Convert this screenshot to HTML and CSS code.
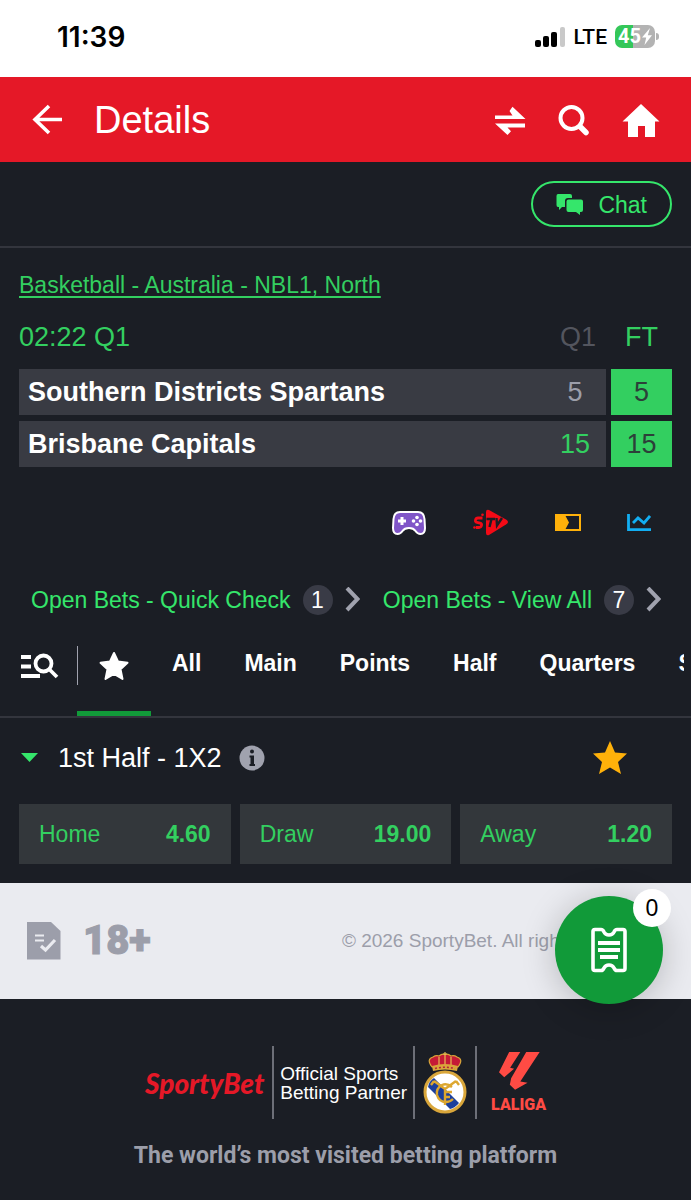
FILE: index.html
```html
<!DOCTYPE html>
<html lang="en">
<head>
<meta charset="utf-8">
<meta name="viewport" content="width=device-width, initial-scale=1">
<title>Details</title>
<link rel="stylesheet" href="styles.css">
</head>
<body>
<div class="status">
  <span class="status-time">11:39</span>
  <div class="status-right">
    <svg width="31" height="22" viewBox="0 0 31 22"><rect x="0" y="14" width="6" height="7" rx="2"/><rect x="8" y="10" width="6" height="11" rx="2"/><rect x="16" y="6" width="6" height="15" rx="2"/><rect x="25" y="1" width="5" height="20" rx="2" fill="#c9c9c9"/></svg>
    <span class="status-net">LTE</span>
    <div class="battery">
      <span>45</span>
      <svg width="10" height="17" viewBox="0 0 10 17"><path d="M8 0 0 9.500h4.200L2.500 17 10 7.200H5.800z" fill="#fff"/></svg>
    </div>
  </div>
</div>
<header class="header">
  <button class="icon-btn" aria-label="Back"><svg width="32" height="32" viewBox="0 0 32 32" fill="none" stroke="#fff" stroke-width="3.600"><path d="M18 2 4 15.500 18 29M4 15.500h27"/></svg></button>
  <h1 class="title">Details</h1>
  <button class="icon-btn" aria-label="Swap"><svg width="32" height="30" viewBox="0 0 32 30" fill="#fff"><path d="M1 10.500h17.500L15.500 6l3-4.200L31.500 14H1zM31 22.500H13.500L17 26.300 13.500 30 1 18.500h30z"/></svg></button>
  <button class="icon-btn" aria-label="Search"><svg width="34" height="32" viewBox="0 0 34 32" fill="none" stroke="#fff"><circle cx="14.500" cy="14" r="11" stroke-width="4"/><path d="m23 22.500 6 6" stroke-width="5.500" stroke-linecap="round"/></svg></button>
  <button class="icon-btn" aria-label="Home"><svg width="38" height="34" viewBox="0 0 38 34" fill="#fff"><path d="M19 1 37.500 18.500H33V34H23V23h-7v11H6V18.500H.5z"/></svg></button>
</header>
<main>
  <div class="chat-bar">
    <button class="chat"><svg width="28" height="22" viewBox="0 0 28 22" fill="#35e66b"><path d="M2 0h12q2 0 2 2v2h-4q-3 0-3 3v6H6l-3 3v-3H2q-1.500 0-1.500-2V2Q.5 0 2 0z"/><path d="M12.500 5.500H25q2 0 2 2V16q0 2-2 2h-1v3l-4-3h-7.500q-2 0-2-2V7.500q0-2 2-2z"/></svg>Chat</button>
  </div>
  <section class="match">
    <a class="league" href="#">Basketball - Australia - NBL1, North</a>
    <table class="score">
      <thead><tr><th class="clock">02:22 Q1</th><th class="q-col">Q1</th><th class="ft-col">FT</th></tr></thead>
      <tbody>
        <tr><th class="team">Southern Districts Spartans</th><td class="q">5</td><td class="ft">5</td></tr>
        <tr><th class="team">Brisbane Capitals</th><td class="q lead">15</td><td class="ft">15</td></tr>
      </tbody>
    </table>
    <div class="media">
      <button class="icon-btn" aria-label="Games"><svg width="36" height="26" viewBox="0 0 36 26"><path d="M9 2h18q6 0 6.500 7l.5 9q0 6-4.500 6-3 0-5-3-2-3-6.500-3t-6.500 3q-2 3-5 3Q2 24 2 18l.5-9Q3 2 9 2z" fill="#8055c8" stroke="#fff" stroke-width="2"/><path d="M11 7v8M7 11h8" stroke="#fff" stroke-width="3"/><g fill="#fff"><circle cx="26" cy="7.500" r="1.800"/><circle cx="26" cy="14.500" r="1.800"/><circle cx="22.500" cy="11" r="1.800"/><circle cx="29.500" cy="11" r="1.800"/></g></svg></button>
      <button class="icon-btn" aria-label="Live TV"><svg width="36" height="28" viewBox="0 0 36 28"><path d="M13 3q0-3 3-2l17 9.500q4 2.500 0 5L16 26q-3 1-3-2z" fill="#f30a16"/><path d="M9.500 9H5q-2 0-2.500 2t1.500 2.500l3 .5q2 .5 1.500 2.500T6 18.500H3" stroke="#f30a16" stroke-width="2.800" fill="none"/><circle cx="9.500" cy="5.800" r="1.300" fill="#f30a16"/><circle cx="1.500" cy="18.500" r="1.300" fill="#f30a16"/><path d="M13.500 10H22M18.500 10 16.500 18M23.500 9l.5 7.500L29 9" fill="none" stroke="#1b1e25" stroke-width="2.400"/></svg></button>
      <button class="icon-btn" aria-label="Tracker"><svg width="26" height="18" viewBox="0 0 26 18"><path d="M1 1h24v15H1z" fill="none" stroke="#ffb10a" stroke-width="2"/><path d="M1 1h9l4 7.500-4 7.500H1z" fill="#ffb10a"/></svg></button>
      <button class="icon-btn" aria-label="Statistics"><svg width="24" height="18" viewBox="0 0 24 18" fill="none" stroke="#12aef2" stroke-width="2.800"><path d="M1.500 0v15.600H24M6 9l5-5 6 5 6-7"/></svg></button>
    </div>
    <div class="open-bets">
      <a href="#">Open Bets - Quick Check<span class="count">1</span><svg width="15" height="26" viewBox="0 0 15 26"><path d="m2 1 10.500 11L2 23" fill="none" stroke="#a0a2ae" stroke-width="4"/></svg></a>
      <a href="#">Open Bets - View All<span class="count">7</span><svg width="15" height="26" viewBox="0 0 15 26"><path d="m2 1 10.500 11L2 23" fill="none" stroke="#a0a2ae" stroke-width="4"/></svg></a>
    </div>
  </section>
  <nav class="tabs">
    <button class="icon-btn find" aria-label="Find market"><svg width="38" height="26" viewBox="0 0 38 26" fill="none" stroke="#fff" stroke-width="3.800"><path d="M0 4h10M0 13.500h10M0 23h19"/><circle cx="22.500" cy="10.500" r="8"/><path d="m28 16 8 8"/></svg></button>
    <div class="tab-list">
      <button class="tab active" aria-label="Favourites"><svg width="30" height="30" viewBox="0 0 30 30" fill="#fff" stroke="#fff" stroke-width="2" stroke-linejoin="round"><path d="m15 2 4 8.500 9.500 1.300-7 6.400L23.500 28 15 23l-8.500 5 2-9.800-7-6.400L11 10.500z"/></svg></button>
      <button class="tab">All</button><button class="tab">Main</button><button class="tab">Points</button><button class="tab">Half</button><button class="tab">Quarters</button><button class="tab">Specials</button>
    </div>
  </nav>
  <section class="market">
    <div class="market-head">
      <svg width="18" height="10" viewBox="0 0 18 10"><path d="M0 0h17L8.500 9z" fill="#35e66b"/></svg>
      <h2>1st Half - 1X2</h2>
      <svg width="26" height="26" viewBox="0 0 26 26"><circle cx="13" cy="13" r="12.500" fill="#a0a2ae"/><circle cx="13" cy="6.500" r="2" fill="#1b1e25"/><path d="M10.500 10.500H15V19h1v2h-5.500v-2h1v-6.500h-1z" fill="#1b1e25"/></svg>
      <button class="icon-btn fav" aria-label="Remove favourite"><svg width="34" height="34" viewBox="0 0 34 34" fill="#ffb10a"><path d="m17 0 5 11.500L34 12.500l-9 8.500 3 12-11-6.500L6 33l3-12-9-8.500 12-1z"/></svg></button>
    </div>
    <div class="odds">
      <button class="odd"><span>Home</span><b>4.60</b></button>
      <button class="odd"><span>Draw</span><b>19.00</b></button>
      <button class="odd"><span>Away</span><b>1.20</b></button>
    </div>
  </section>
</main>
<footer>
  <div class="legal">
    <svg width="34" height="38" viewBox="0 0 34 38"><path d="M0 0h24l9.500 9v28.500H0z" fill="#9c9eaa"/><path d="M8 13.500h9M8 18.500h9" stroke="#eaebf0" stroke-width="2.200"/><path d="m14 24 4.500 4L28 18" fill="none" stroke="#eaebf0" stroke-width="3.200"/></svg>
    <span class="age">18+</span>
    <span class="copy">© 2026 SportyBet. All rights reserved.</span>
    <button class="slip" aria-label="Betslip"><svg width="36" height="46" viewBox="0 0 36 46" fill="none" stroke="#fff"><path d="M4 2.500h6q2 0 3 2.500 1.500 3 5 3t5-3q1-2.500 3-2.500h6q2 0 2 2v37q0 2-2 2h-6q-2 0-3-2.500-1.500-3-5-3t-5 3q-1 2.500-3 2.500H4q-2 0-2-2v-37q0-2 2-2z" stroke-width="3.600"/><path d="M7 16h22M7 23h22M9 30h18" stroke-width="4.200"/></svg><span class="slip-count">0</span></button>
  </div>
  <div class="partners">
    <div class="partner-row">
      <span class="brand">SportyBet</span>
      <span class="partner-text">Official Sports<br>Betting Partner</span>
      <span class="crest"><svg width="44" height="62" viewBox="0 0 44 62"><path d="M9 15Q3 7 10 5q3-2 6-1 3-2.500 6-1.500 3-1 6 1.500 3-1 6 1 7 2 1 10z" fill="#c51b36" stroke="#d9a63a" stroke-width="1.200"/><path d="M22 0v5M20 2h4M16 5v8M22 5v8M28 5v8" stroke="#e8bd53" stroke-width="1.200"/><path d="M9 14q13-4 26 0l-1 5q-12-3-24 0z" fill="#d9a63a"/><path d="M12 16.500q10-2.500 20 0" fill="none" stroke="#b3233c" stroke-width="1.500" stroke-dasharray="2 2"/><circle cx="22" cy="40" r="20" fill="#fff" stroke="#d9a63a" stroke-width="3"/><path d="M5 35q1-6 6-9l25 25q-4 5-9 6z" fill="#1c3f9c"/><path d="M11 29l11 8 11-8M11 29l-3 4M33 29l3 4M29 35q-5-4-10-2-6 3-5 10 2 7 9 7 4 0 7-3M22 38v15M22 40h7M22 45h5" fill="none" stroke="#dda72f" stroke-width="2.400"/></svg></span>
      <span class="laliga"><svg width="42" height="40" viewBox="288 61 128 120" fill="#ff4b44"><path d="M322 63h34l-31 48 12 3-30 26-16-15z"/><path d="M374 63h41l-59 90 22 4-38 21-16-15 4-20z"/></svg>LALIGA</span>
    </div>
    <p class="tagline">The world’s most visited betting platform</p>
  </div>
</footer>
</body>
</html>
```
FILE: styles.css
```css
* { box-sizing: border-box; }
body {
  margin: 0;
  background: #1b1e25;
  color: #fff;
  font: 23px/30px "Liberation Sans", Arial, sans-serif;
}
button {
  font: inherit;
  color: inherit;
  background: none;
  border: 0;
  padding: 0;
  white-space: nowrap;
}
a { color: inherit; }
svg { display: block; flex: none; }
h1, h2, p { margin: 0; font-weight: 400; }
.icon-btn { flex: none; }

.status {
  display: flex;
  justify-content: space-between;
  align-items: center;
  height: 77px;
  padding: 0 33px 4px 57px;
  background: #fff;
  color: #000;
}
.status-time { font: 600 28px/32px Inter, sans-serif; }
.status-right { display: flex; align-items: center; gap: 8px; }
.status-net { font: 500 21px/28px Roboto, sans-serif; }
.battery {
  position: relative;
  display: flex;
  align-items: center;
  justify-content: center;
  gap: 1px;
  width: 40px;
  height: 23px;
  margin-right: 3px;
  border-radius: 7px;
  background: linear-gradient(90deg, #34c759 45%, #b3b3b3 45%);
  color: #fff;
  font: 700 20px/23px Roboto, sans-serif;
}
.battery::after {
  content: "";
  position: absolute;
  right: -4px;
  top: 8px;
  width: 3px;
  height: 7px;
  border-radius: 0 3px 3px 0;
  background: #b3b3b3;
}

.header {
  display: flex;
  align-items: center;
  height: 85px;
  padding: 0 31px;
  gap: 31px;
  background: #e51827;
}
.title { flex: 1; font-size: 38px; line-height: 44px; }

.chat-bar {
  display: flex;
  justify-content: flex-end;
  padding: 19px 19px;
  border-bottom: 2px solid #33353d;
}
.chat {
  display: flex;
  align-items: center;
  gap: 14px;
  height: 46px;
  padding: 2px 23px 0;
  border: 2px solid #35e66b;
  border-radius: 23px;
  color: #35e66b;
}

.match { padding: 22px 19px 0; }
.league { display: block; color: #33cf60; text-underline-offset: 3px; text-decoration-thickness: 2px; }
.score {
  width: 100%;
  margin-top: 15px;
  border-spacing: 0 6px;
  font-size: 27px;
  line-height: 32px;
}
.score th, .score td { padding: 0; text-align: center; font-weight: 400; }
.score thead th { height: 42px; padding-bottom: 10px; color: #33cf60; }
.score .clock { text-align: left; }
.score thead .q-col { width: 62px; padding-left: 6px; color: #53555e; }
.score .ft-col { width: 66px; border-left: 5px solid transparent; }
.score tbody th, .score tbody td { height: 46px; background: #393b43; }
.score tbody .team { padding-left: 9px; text-align: left; font-weight: 700; }
.score tbody .q { color: #9c9eaa; }
.score tbody .lead { color: #33cf60; }
.score tbody .ft {
  border-left: 5px solid #1b1e25;
  background: #33cf60;
  color: #2c4039;
}

.media {
  display: flex;
  justify-content: flex-end;
  align-items: center;
  gap: 46px;
  height: 36px;
  margin-top: 32px;
  padding-right: 21px;
}
.open-bets {
  display: flex;
  justify-content: space-between;
  margin-top: 44px;
  padding: 0 11px 0 12px;
  color: #35e66b;
}
.open-bets a {
  display: flex;
  align-items: center;
  gap: 12px;
  text-decoration: none;
  white-space: nowrap;
}
.count {
  width: 30px;
  height: 30px;
  border-radius: 50%;
  background: #393b46;
  color: #fff;
  text-align: center;
}

.tabs {
  display: flex;
  margin-top: 19px;
  padding: 0 7px 0 21px;
  border-bottom: 2px solid #33353d;
}
.find { height: 64px; }
.tab-list {
  position: relative;
  display: flex;
  gap: 43px;
  flex: 1;
  min-width: 0;
  margin-left: 18px;
  overflow: hidden;
}
.tab-list::before {
  content: "";
  position: absolute;
  left: -1px;
  top: 12px;
  width: 2px;
  height: 39px;
  background: #a0a2ae;
}
.tab {
  flex: none;
  height: 82px;
  padding-bottom: 24px;
  font-weight: 700;
}
.tab.active {
  margin: 0 -22px 0 0;
  padding: 4px 22px 18px;
  border-bottom: 5px solid #119a39;
}

.market { padding: 0 19px 19px; }
.market-head {
  display: flex;
  align-items: center;
  height: 86px;
  padding: 0 45px 6px 2px;
}
.market-head h2 { margin: 0 17px 0 19px; font-size: 27px; line-height: 32px; }
.fav { margin-left: auto; }
.odds { display: grid; grid-template-columns: repeat(3, 1fr); gap: 9px; }
.odd {
  display: flex;
  justify-content: space-between;
  align-items: center;
  height: 60px;
  padding: 0 20px;
  background: #33373b;
  color: #33cf60;
}

.legal {
  position: relative;
  display: flex;
  align-items: center;
  height: 116px;
  padding: 0 32px 0 27px;
  background: #eaebf0;
  color: #9c9eaa;
}
.age {
  margin-left: 22px;
  font: 900 40px/48px Roboto, sans-serif;
  -webkit-text-stroke: 1px #9c9eaa;
}
.copy { margin-left: auto; font-size: 19px; white-space: nowrap; }
.slip {
  position: absolute;
  right: 28px;
  top: 13px;
  display: flex;
  align-items: center;
  justify-content: center;
  width: 108px;
  height: 108px;
  border-radius: 50%;
  background: #119a39;
  box-shadow: 0 4px 34px rgba(0, 0, 0, .22);
}
.slip-count {
  position: absolute;
  right: -8px;
  top: -7px;
  width: 38px;
  height: 38px;
  border-radius: 50%;
  background: #fff;
  color: #000;
  line-height: 38px;
}

.partners { padding: 47px 0 29px; }
.partner-row { display: flex; justify-content: center; align-items: stretch; height: 73px; }
.partner-row > span { display: flex; align-items: center; }
.partner-row > span + span { border-left: 2px solid #6d6f78; }
.brand { padding-right: 8px; color: #e51827; font: italic 900 28px/32px Lato, sans-serif; }
.partner-row > .partner-text { padding: 0 6px; font-size: 19px; line-height: 19px; }
.crest { padding: 0 8px; }
.partner-row > .laliga {
  flex-direction: column;
  justify-content: center;
  gap: 4px;
  padding-left: 14px;
  color: #ff4b44;
  font: 900 16px/20px Roboto, sans-serif;
}
.tagline {
  margin-top: 22px;
  color: #9c9eaa;
  font: 700 23px/30px Roboto, sans-serif;
  text-align: center;
}
```
